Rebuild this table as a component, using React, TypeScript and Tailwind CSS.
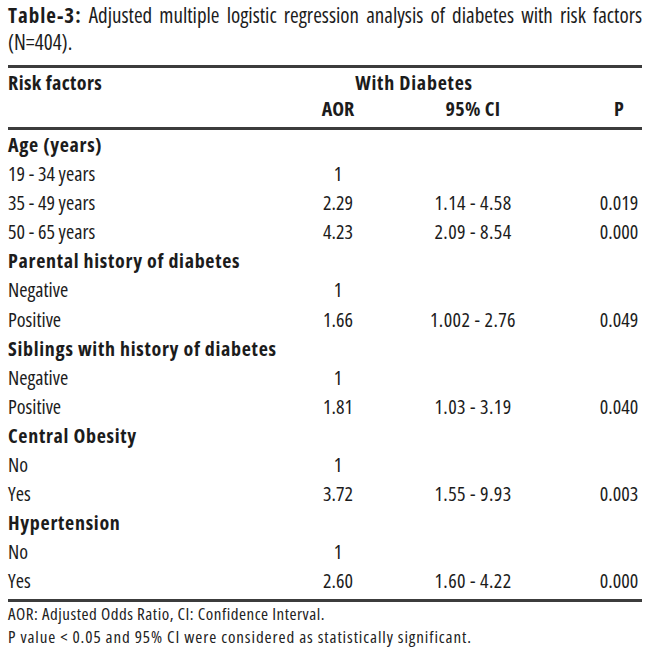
type Row = {
  label: string;
  aor?: string;
  ci?: string;
  p?: string;
  group?: boolean;
};

const rows: Row[] = [
  { label: "Age (years)", group: true },
  { label: "19 - 34 years", aor: "1" },
  { label: "35 - 49 years", aor: "2.29", ci: "1.14 - 4.58", p: "0.019" },
  { label: "50 - 65 years", aor: "4.23", ci: "2.09 - 8.54", p: "0.000" },
  { label: "Parental history of diabetes", group: true },
  { label: "Negative", aor: "1" },
  { label: "Positive", aor: "1.66", ci: "1.002 - 2.76", p: "0.049" },
  { label: "Siblings with history of diabetes", group: true },
  { label: "Negative", aor: "1" },
  { label: "Positive", aor: "1.81", ci: "1.03 - 3.19", p: "0.040" },
  { label: "Central Obesity", group: true },
  { label: "No", aor: "1" },
  { label: "Yes", aor: "3.72", ci: "1.55 - 9.93", p: "0.003" },
  { label: "Hypertension", group: true },
  { label: "No", aor: "1" },
  { label: "Yes", aor: "2.60", ci: "1.60 - 4.22", p: "0.000" },
];

const grid = "grid grid-cols-[262px_136px_134px_1fr] items-center";

function PCell({ children }: { children?: React.ReactNode }) {
  return (
    <div className="flex justify-end pr-[2px]">
      <div className="w-[42px] text-center">{children}</div>
    </div>
  );
}

export default function App() {
  return (
    <div className="w-[650px] min-h-[659px] bg-white px-[8px] pt-[2px] text-[#1c1c1c] font-['Open_Sans',sans-serif] font-stretch-condensed">
      <p className="text-[21px] leading-[27px] text-justify [text-align-last:left]">
        <span className="font-bold tracking-[1px]">Table-3:</span> Adjusted
        multiple logistic regression analysis of diabetes with risk factors
        (N=404).
      </p>

      {/* header */}
      <div className="mt-[9px] border-t-[3px] border-[#3c3c3c] text-[20px] font-bold">
        <div className={`${grid} h-[26px]`}>
          <div className="tracking-[0.4px]">Risk factors</div>
          <div className="col-span-2 text-center pl-[18px] tracking-[0.75px]">With Diabetes</div>
          <div />
        </div>
        <div className={`${grid} h-[33px] pb-[3px]`}>
          <div />
          <div className="text-center">AOR</div>
          <div className="text-center tracking-[0.4px]">95% CI</div>
          <PCell>P</PCell>
        </div>
      </div>

      <div className="border-y-[3px] border-[#3c3c3c] pb-[3px]">
        {rows.map((r, i) => (
          <div
            key={i}
            className={`${grid} h-[29.1px] text-[20px] ${r.group ? "font-bold tracking-[0.7px]" : ""}`}
          >
            <div className="whitespace-nowrap">{r.label}</div>
            <div className="text-center">{r.aor}</div>
            <div className="text-center tracking-[0.4px]">{r.ci}</div>
            <PCell>{r.p}</PCell>
          </div>
        ))}
      </div>

      <div className="text-[17px] leading-[23px] text-[#222]">
        <p className="tracking-[0.5px]">AOR: Adjusted Odds Ratio, CI: Confidence Interval.</p>
        <p className="tracking-[0.9px]">P value &lt; 0.05 and 95% CI were considered as statistically significant.</p>
      </div>
    </div>
  );
}
